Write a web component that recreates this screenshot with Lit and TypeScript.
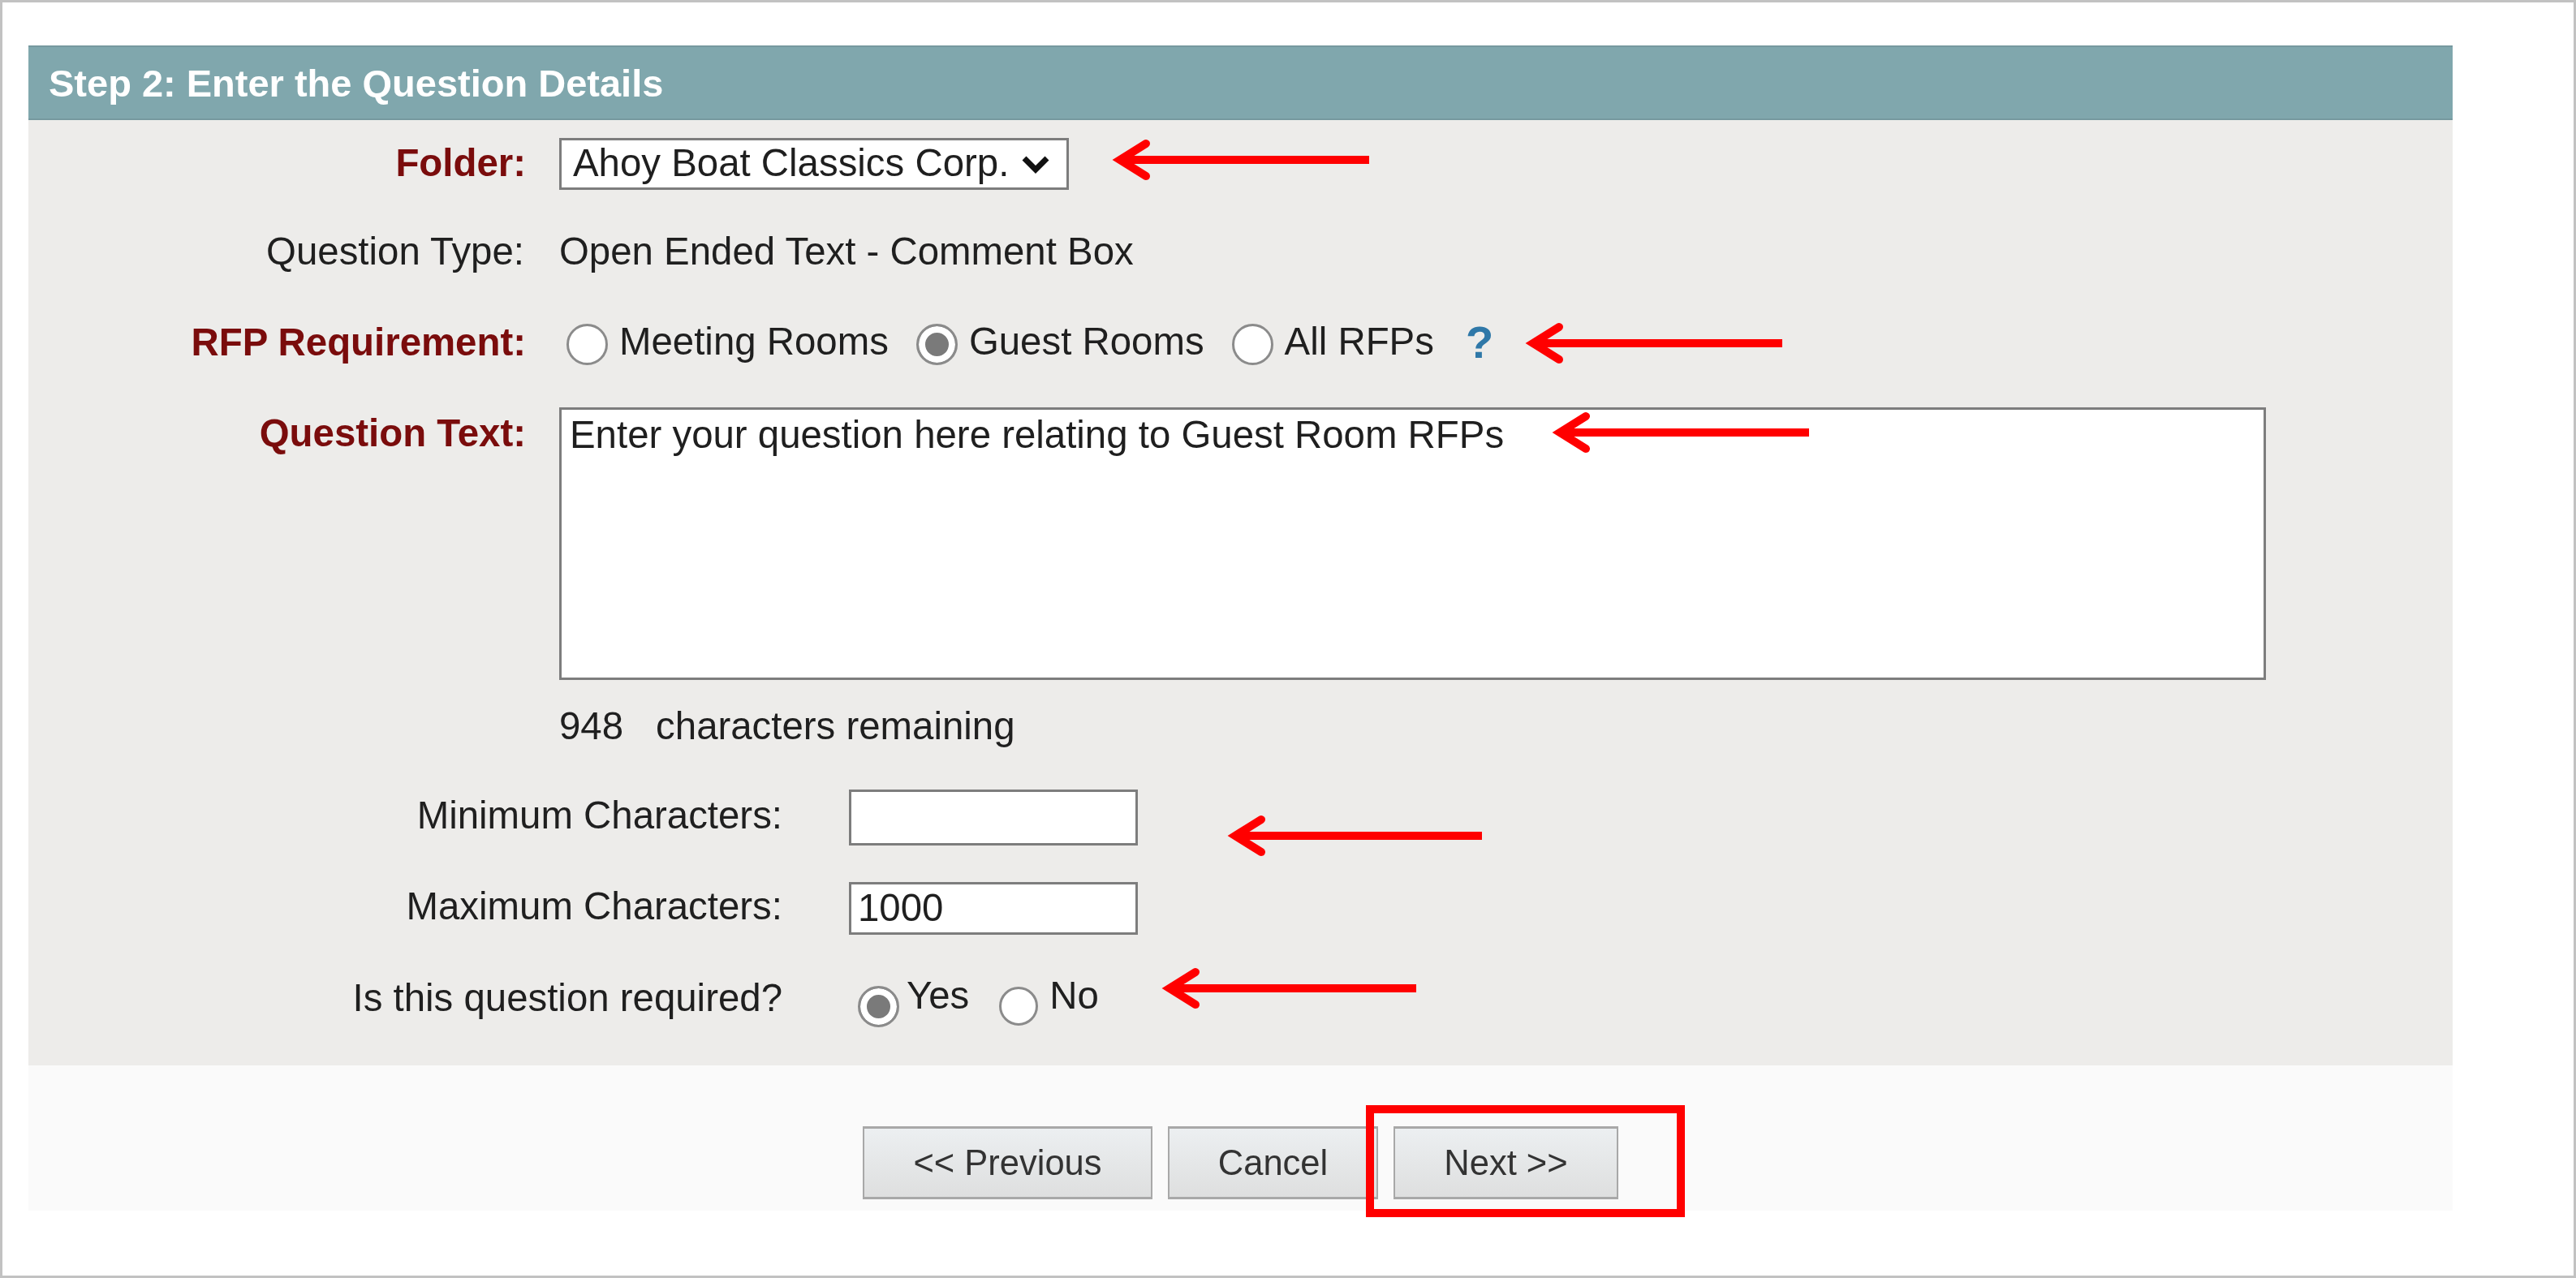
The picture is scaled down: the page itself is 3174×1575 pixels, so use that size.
import { LitElement, html, css, svg } from "lit";
import { customElement } from "lit/decorators.js";

const arrows: [number, number, number][] = [
  [1372, 1687, 197],
  [1881, 2196, 423],
  [1914, 2229, 533],
  [1514, 1826, 1030],
  [1433, 1745, 1218],
];

@customElement("app-root")
export class AppRoot extends LitElement {
  static styles = css`
    :host {
      display: block;
      font-family: "Liberation Sans", Arial, sans-serif;
      font-size: 47.4px;
      color: #1f1f1f;
    }
    * { box-sizing: border-box; }
    .frame {
      position: relative;
      width: 3174px;
      height: 1575px;
      border: 3px solid #c2c2c2;
      background: #fff;
      padding: 53px 149px 0 32px;
      overflow: hidden;
    }
    .card { width: 2987px; filter: blur(0.6px); }
    .head {
      height: 92px;
      background: #80a7ad;
      border-top: 2px solid #76999f;
      border-bottom: 2px solid #76999f;
      color: #fff;
      font-weight: 700;
      font-size: 47px;
      padding-left: 25px;
      display: flex;
      align-items: center;
    }
    .body {
      height: 1165px;
      background: #edecea;
      padding-top: 22px;
    }
    .row {
      display: flex;
      align-items: center;
      height: 64px;
    }
    .label {
      width: 613px;
      text-align: right;
      margin-right: 41px;
      flex: none;
      position: relative;
      top: -2px;
    }
    .label.plain { width: 611px; margin-right: 43px; top: 0; }
    .label.req { color: #7a0c0c; font-weight: 700; }
    .r2 { margin-top: 45px; position: relative; top: -2px; }
    .r3 { margin-top: 49px; }
    .r3 .label { top: -3px; }
    .r4 { margin-top: 46px; height: 336px; align-items: flex-start; }
    .r4 .label { top: 4px; }
    .r5 { margin-top: 24px; height: 64px; }
    .r6 { margin-top: 47px; height: 69px; }
    .r7 { margin-top: 45px; height: 65px; }
    .r8 { margin-top: 42px; height: 70px; }
    .sub {
      width: 929px;
      text-align: right;
      margin-right: 82px;
      flex: none;
      position: relative;
      top: -3px;
    }
    .r8 .sub { top: 0; }
    .selwrap { position: relative; width: 628px; height: 64px; }
    select {
      appearance: none;
      width: 100%;
      height: 100%;
      background: #fff;
      border: 3px solid #7d7d7d;
      border-radius: 0;
      font: inherit;
      color: #1f1f1f;
      padding: 0 0 4px 14px;
    }
    .chev {
      position: absolute;
      right: 23px;
      top: 20px;
      width: 36px;
      height: 24px;
      pointer-events: none;
    }
    textarea, input[type="text"] {
      background: #fff;
      border: 3px solid #7d7d7d;
      border-radius: 0;
      font: inherit;
      color: #1f1f1f;
      outline: none;
    }
    textarea {
      width: 2103px;
      height: 336px;
      padding: 3px 10px;
      resize: none;
      overflow: hidden;
    }
    input[type="text"] {
      width: 356px;
      height: 100%;
      padding: 0 8px 3px;
    }
    .opts { display: flex; align-items: center; }
    .opt { display: flex; align-items: center; gap: 14px; margin-right: 34px; }
    .opt span { position: relative; top: -4px; }
    input[type="radio"] {
      appearance: none;
      width: 51px;
      height: 51px;
      margin: 0;
      flex: none;
      border: 3px solid #8b8b8b;
      border-radius: 50%;
      background: #fff;
    }
    input[type="radio"]:checked {
      background: #7a7a7a;
      box-shadow: inset 0 0 0 8px #fff;
    }
    .first { margin-left: 9px; }
    .help {
      color: #2f78a8;
      font-weight: 700;
      font-size: 56px;
      margin-left: 5px;
      position: relative;
      top: -3px;
    }
    .count { display: flex; gap: 40px; }
    .req-opts { margin-left: 11px; }
    .req-opts .opt { gap: 9px; margin-right: 37px; }
    .req-opts .opt span { top: -3px; }
    .req-opts input[type="radio"] { position: relative; top: 11px; }
    .req-opts .no input[type="radio"] { width: 48px; height: 48px; margin-right: 5px; }
    .foot {
      height: 179px;
      background: #fafafa;
      padding-top: 75px;
      display: flex;
      justify-content: center;
      align-items: flex-start;
      gap: 19px;
    }
    button {
      height: 90px;
      font: inherit;
      font-size: 43.5px;
      color: #333;
      background: linear-gradient(#eceff1, #dedfdf);
      border: 2px solid #a8a8a8;
      border-top-width: 3px;
      border-bottom-width: 3px;
      border-radius: 0;
      padding: 0;
    }
    .prev { width: 357px; }
    .cancel { width: 259px; }
    .next { width: 277px; }
    .marks {
      position: absolute;
      left: -3px;
      top: -3px;
      width: 3174px;
      height: 1575px;
      pointer-events: none;
    }
  `;

  render() {
    return html`
      <div class="frame">
        <div class="card">
          <div class="head">Step 2: Enter the Question Details</div>
          <div class="body">
            <div class="row">
              <div class="label req">Folder:</div>
              <div class="selwrap">
                <select><option>Ahoy Boat Classics Corp.</option></select>
                <svg class="chev" viewBox="0 0 36 24">
                  <path d="M4 5 L18 19 L32 5" fill="none" stroke="#111" stroke-width="7" />
                </svg>
              </div>
            </div>
            <div class="row r2">
              <div class="label plain">Question Type:</div>
              <div>Open Ended Text - Comment Box</div>
            </div>
            <div class="row r3">
              <div class="label req">RFP Requirement:</div>
              <div class="opts first">
                <label class="opt"><input type="radio" name="rfp" /><span>Meeting Rooms</span></label>
                <label class="opt"><input type="radio" name="rfp" checked /><span>Guest Rooms</span></label>
                <label class="opt"><input type="radio" name="rfp" /><span>All RFPs</span></label>
                <span class="help">?</span>
              </div>
            </div>
            <div class="row r4">
              <div class="label req">Question Text:</div>
              <textarea .value=${"Enter your question here relating to Guest Room RFPs"}></textarea>
            </div>
            <div class="row r5">
              <div class="label plain"></div>
              <div class="count"><span>948</span><span>characters remaining</span></div>
            </div>
            <div class="row r6">
              <div class="sub">Minimum Characters:</div>
              <input type="text" />
            </div>
            <div class="row r7">
              <div class="sub">Maximum Characters:</div>
              <input type="text" value="1000" />
            </div>
            <div class="row r8">
              <div class="sub">Is this question required?</div>
              <div class="opts req-opts">
                <label class="opt"><input type="radio" name="q" checked /><span>Yes</span></label>
                <label class="opt no"><input type="radio" name="q" /><span>No</span></label>
              </div>
            </div>
          </div>
          <div class="foot">
            <button class="prev">&lt;&lt; Previous</button>
            <button class="cancel">Cancel</button>
            <button class="next">Next &gt;&gt;</button>
          </div>
        </div>
        <svg class="marks" viewBox="0 0 3174 1575">
          ${arrows.map(
            ([a, b, y]) => svg`
              <path d="M${a + 8} ${y} H${b}" stroke="#ff0000" stroke-width="10" fill="none" />
              <path d="M${a + 40} ${y - 20} L${a + 8} ${y} L${a + 40} ${y + 20}" stroke="#ff0000" stroke-width="10" fill="none" stroke-linecap="round" />
            `
          )}
          <rect x="1688" y="1367" width="383" height="128" fill="none" stroke="#ff0000" stroke-width="10" />
        </svg>
      </div>
    `;
  }
}
